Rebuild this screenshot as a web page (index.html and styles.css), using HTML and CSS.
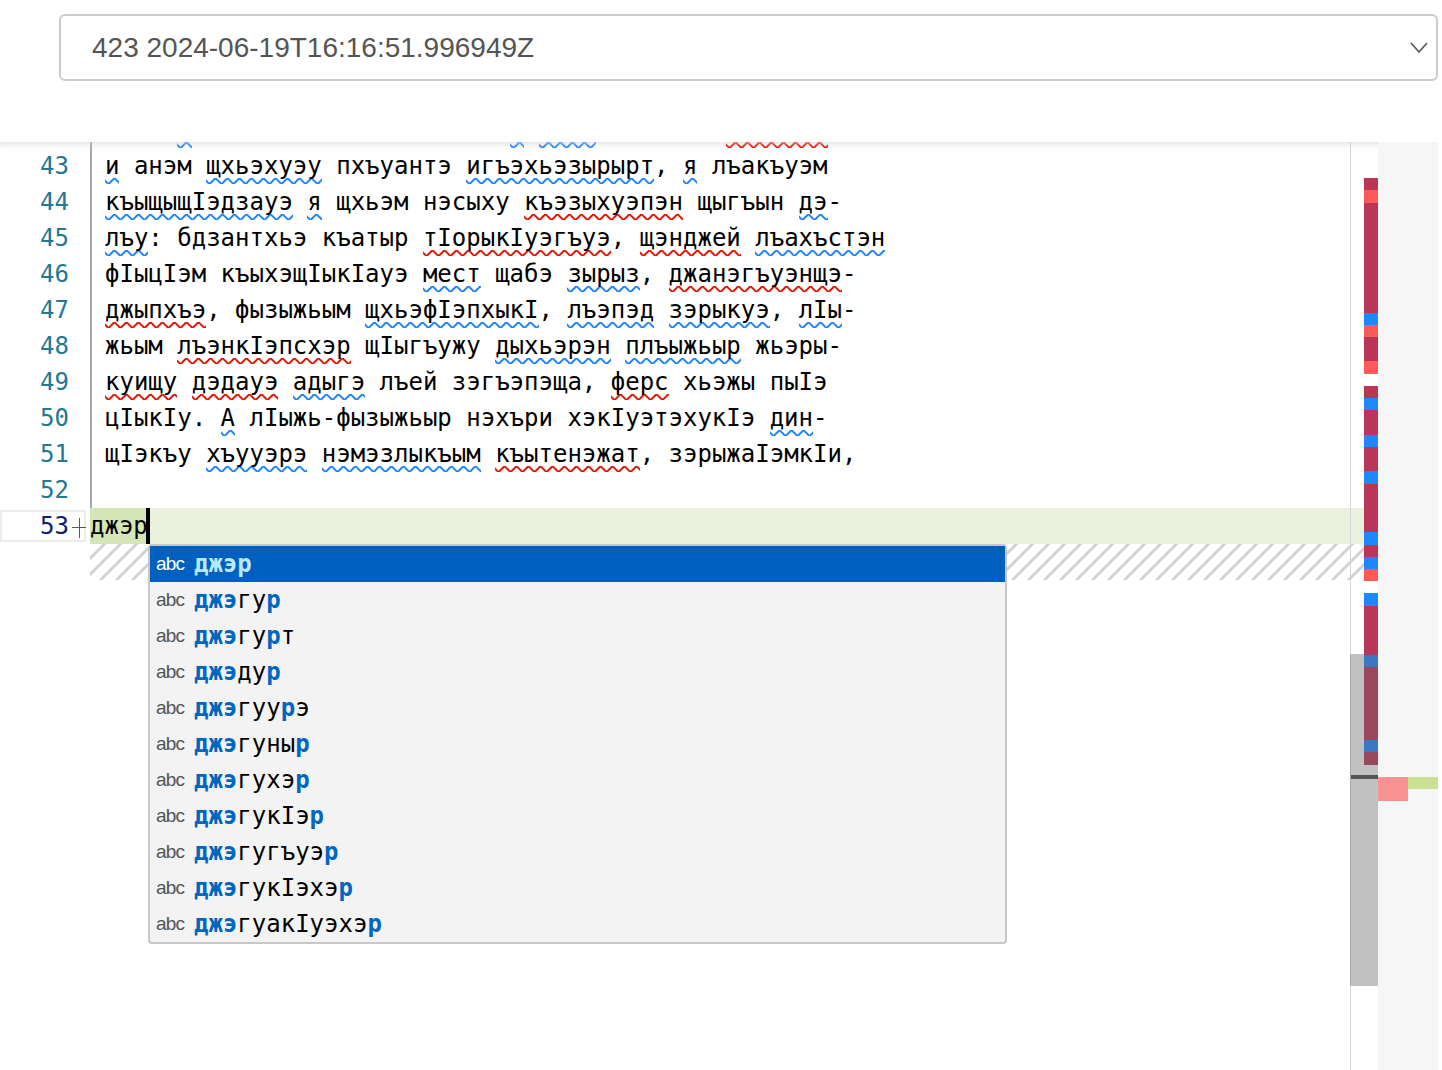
FILE: index.html
```html
<!DOCTYPE html>
<html lang="kbd">
<head>
<meta charset="utf-8">
<title>Editor</title>
<link rel="stylesheet" href="styles.css">
</head>
<body>
<header class="top">
  <div class="select">
    <span class="select-text">423 2024-06-19T16:16:51.996949Z</span>
    <svg class="chev" width="18" height="11" viewBox="0 0 18 11"><path d="M1 1 L9 10 L17 1" fill="none" stroke="#555" stroke-width="1.6"/></svg>
  </div>
</header>
<div class="editor">
  <div class="main">
    <div class="lines">
      <div class="row"><div class="gutter"></div><div class="code">     <span class="i"> </span>                      <span class="i"> </span> <span class="i">    </span>         <span class="e">       </span></div></div>
      <div class="row"><div class="gutter">43</div><div class="code"><span class="i">и</span> анэм <span class="i">щхьэхуэу</span> пхъуантэ <span class="i">игъэхьэзырырт</span>, <span class="i">я</span> лъакъуэм</div></div>
      <div class="row"><div class="gutter">44</div><div class="code"><span class="i">къыщыщIэдзауэ</span> <span class="i">я</span> щхьэм нэсыху <span class="e">къэзыхуэпэн</span> щыгъын <span class="i">дэ</span>-</div></div>
      <div class="row"><div class="gutter">45</div><div class="code"><span class="i">лъу</span>: бдзантхьэ къатыр <span class="e">тIорыкIуэгъуэ</span>, <span class="e">щэнджей</span> <span class="i">лъахъстэн</span></div></div>
      <div class="row"><div class="gutter">46</div><div class="code">фIыцIэм къыхэщIыкIауэ <span class="i">мест</span> щабэ <span class="i">зырыз</span>, <span class="e">джанэгъуэнщэ</span>-</div></div>
      <div class="row"><div class="gutter">47</div><div class="code"><span class="e">джыпхъэ</span>, фызыжьым <span class="i">щхьэфIэпхыкI</span>, <span class="i">лъэпэд</span> <span class="i">зэрыкуэ</span>, <span class="i">лIы</span>-</div></div>
      <div class="row"><div class="gutter">48</div><div class="code">жьым <span class="e">лъэнкIэпсхэр</span> щIыгъужу <span class="i">дыхьэрэн</span> <span class="i">плъыжьыр</span> жьэры-</div></div>
      <div class="row"><div class="gutter">49</div><div class="code"><span class="e">куищу</span> <span class="e">дэдауэ</span> <span class="i">адыгэ</span> лъей зэгъэпэща, <span class="e">ферс</span> хьэжы пыIэ</div></div>
      <div class="row"><div class="gutter">50</div><div class="code">цIыкIу. <span class="i">А</span> лIыжь-фызыжьыр нэхъри хэкIуэтэхукIэ <span class="i">дин</span>-</div></div>
      <div class="row"><div class="gutter">51</div><div class="code">щIэкъу <span class="i">хъууэрэ</span> <span class="i">нэмэзлыкъым</span> <span class="e">къытенэжат</span>, зэрыжаIэмкIи,</div></div>
      <div class="row"><div class="gutter">52</div><div class="code"></div></div>
      <div class="row"><div class="gutter gutter-act"><span class="ln-act">53</span><svg class="plus" width="16" height="24" viewBox="0 0 16 24"><path d="M1 11.5H15M8.5 2V22" stroke="#5a5a5a" stroke-width="1" fill="none"/></svg></div><div class="code code-add"><span class="word-add">джэр</span><span class="cursor"></span></div></div>
      <div class="row"><div class="gutter"></div><div class="code code-hatch"></div></div>
    </div>
    <div class="ruler">
      <div class="dw" style="height:36px"></div>
      <div class="dc" style="height:12px"></div>
      <div class="dr" style="height:13px"></div>
      <div class="dc" style="height:110px"></div>
      <div class="db" style="height:12px"></div>
      <div class="dr" style="height:12px"></div>
      <div class="dc" style="height:24px"></div>
      <div class="dr" style="height:13px"></div>
      <div class="dw" style="height:12px"></div>
      <div class="dc" style="height:12px"></div>
      <div class="db" style="height:12px"></div>
      <div class="dc" style="height:25px"></div>
      <div class="db" style="height:12px"></div>
      <div class="dc" style="height:24px"></div>
      <div class="db" style="height:13px"></div>
      <div class="dc" style="height:48px"></div>
      <div class="db" style="height:13px"></div>
      <div class="dc" style="height:12px"></div>
      <div class="db" style="height:12px"></div>
      <div class="dr" style="height:12px"></div>
      <div class="dw" style="height:12px"></div>
      <div class="db" style="height:13px"></div>
      <div class="dc" style="height:49px"></div>
      <div class="db" style="height:12px"></div>
      <div class="dc" style="height:73px"></div>
      <div class="db" style="height:12px"></div>
      <div class="dc" style="height:13px"></div>
    </div>

    <div class="shadow"></div>
    <div class="vline"></div>
    <div class="slider"></div>
    <div class="ruler-cursor"></div>

    <div class="suggest">
      <div class="item sel"><span class="ico">abc</span><span class="lbl"><b>джэр</b></span></div>
      <div class="item"><span class="ico">abc</span><span class="lbl"><b>джэ</b>гу<b>р</b></span></div>
      <div class="item"><span class="ico">abc</span><span class="lbl"><b>джэ</b>гу<b>р</b>т</span></div>
      <div class="item"><span class="ico">abc</span><span class="lbl"><b>джэ</b>ду<b>р</b></span></div>
      <div class="item"><span class="ico">abc</span><span class="lbl"><b>джэ</b>гуу<b>р</b>э</span></div>
      <div class="item"><span class="ico">abc</span><span class="lbl"><b>джэ</b>гуны<b>р</b></span></div>
      <div class="item"><span class="ico">abc</span><span class="lbl"><b>джэ</b>гухэ<b>р</b></span></div>
      <div class="item"><span class="ico">abc</span><span class="lbl"><b>джэ</b>гукIэ<b>р</b></span></div>
      <div class="item"><span class="ico">abc</span><span class="lbl"><b>джэ</b>гугъуэ<b>р</b></span></div>
      <div class="item"><span class="ico">abc</span><span class="lbl"><b>джэ</b>гукIэхэ<b>р</b></span></div>
      <div class="item"><span class="ico">abc</span><span class="lbl"><b>джэ</b>гуакIуэхэ<b>р</b></span></div>
    </div>
  </div>
  <div class="overview">
    <div class="ov-del"></div>
    <div class="ov-add"></div>
  </div>
</div>
</body>
</html>
```

FILE: styles.css
```css
* { box-sizing: border-box; }
html, body { margin: 0; padding: 0; background: #fff; overflow: hidden; }
body { width: 1442px; height: 1070px; font-family: "Liberation Sans", Arial, sans-serif; }

.top { height: 142px; padding: 14px 0 0 59px; }
.select {
  width: 1379px; height: 67px;
  border: 2px solid #cccccc; border-radius: 6px;
  display: flex; align-items: center;
  padding: 0 8px 0 31px;
  color: #555; font-size: 28px; background: #fff;
}
.chev { margin-left: auto; display: block; }

.editor { display: flex; height: 928px; }
.main { position: relative; width: 1378px; height: 100%; overflow: hidden; display: flex; flex: none; }
.lines { width: 1364px; flex: none; margin-top: -30px; font-family: "DejaVu Sans Mono", monospace; font-size: 24px; }
.row { display: flex; height: 36px; line-height: 36px; }
.gutter { width: 90px; flex: none; text-align: right; padding-right: 21px; color: #237893; white-space: pre; }
.code { flex: 1; white-space: pre; color: #000; border-left: 2px solid #a8a8a8; padding-left: 13px; }

.i, .e { display: inline-block; height: 36px; vertical-align: top; background-repeat: repeat-x; background-position: left bottom; background-size: 12px 6px; }
.e { background-image: url("data:image/svg+xml,%3Csvg xmlns='http://www.w3.org/2000/svg' viewBox='0 0 6 3' height='3' width='6'%3E%3Cg fill='%23e51400'%3E%3Cpolygon points='5.5,0 2.5,3 1.1,3 4.1,0'/%3E%3Cpolygon points='4,0 6,2 6,0.6 5.4,0'/%3E%3Cpolygon points='0,2 1,3 2.4,3 0,0.6'/%3E%3C/g%3E%3C/svg%3E"); }
.i { background-image: url("data:image/svg+xml,%3Csvg xmlns='http://www.w3.org/2000/svg' viewBox='0 0 6 3' height='3' width='6'%3E%3Cg fill='%231a85ff'%3E%3Cpolygon points='5.5,0 2.5,3 1.1,3 4.1,0'/%3E%3Cpolygon points='4,0 6,2 6,0.6 5.4,0'/%3E%3Cpolygon points='0,2 1,3 2.4,3 0,0.6'/%3E%3C/g%3E%3C/svg%3E"); }

.gutter-act { position: relative; padding: 2px 0 0 0; text-align: left; }
.ln-act { display: block; width: 86px; height: 32px; border: 2px solid #ececec; text-align: right; padding-right: 15px; line-height: 28px; color: #0b216f; background: #fff; }
.plus { position: absolute; left: 71px; top: 8px; }
.code-add { border-left: none; padding-left: 0; background: #ebf1dd; display: flex; }
.word-add { background: #d4e6b5; }
.cursor { width: 4px; height: 36px; background: #000; margin-left: -2px; }
.code-hatch {
  border-left: none; padding-left: 0;
  background-image: linear-gradient(-45deg, rgba(34,34,34,.2) 12.5%, transparent 12.5%, transparent 50%, rgba(34,34,34,.2) 50%, rgba(34,34,34,.2) 62.5%, transparent 62.5%, transparent 100%);
  background-size: 16px 16px;
}

.ruler { width: 14px; flex: none; display: flex; flex-direction: column; }
.ruler div { flex: none; }
.dw { background: #fff; }
.dc { background: #bb3559; }
.dr { background: #ff5a5a; }
.db { background: #1e88ff; }

.shadow { position: absolute; left: 0; top: 0; width: 100%; height: 8px; box-shadow: inset 0 8px 8px -8px #cfcfcf; }
.vline { position: absolute; left: 1350px; top: 0; bottom: 0; width: 1px; background: #d4d4d4; }
.slider { position: absolute; left: 1350px; top: 512px; width: 28px; height: 332px; background: rgba(100,100,100,.4); }
.ruler-cursor { position: absolute; left: 1351px; top: 633px; width: 27px; height: 4px; background: #555; }

.suggest {
  position: absolute; left: 148px; top: 402px; width: 859px;
  border: 2px solid #c8c8c8; border-radius: 4px; background: #f3f3f3;
  font-family: "DejaVu Sans Mono", monospace; font-size: 24px;
}
.item { height: 36px; display: flex; align-items: center; padding-left: 6px; }
.item.sel { background: #0060c0; }
.ico { width: 38px; flex: none; font-family: "Liberation Sans", Arial, sans-serif; font-size: 19px; letter-spacing: -0.8px; color: #555; }
.lbl { white-space: pre; color: #000; }
.lbl b { color: #0066bf; }
.sel .ico { color: #fff; }
.sel .lbl b { color: #bbe7ff; }

.overview { width: 60px; flex: none; background: #f6f6f6; padding-top: 635px; display: flex; align-items: flex-start; }
.ov-del { width: 30px; height: 24px; background: #f89393; }
.ov-add { width: 30px; height: 12px; background: #cbe294; }
```
